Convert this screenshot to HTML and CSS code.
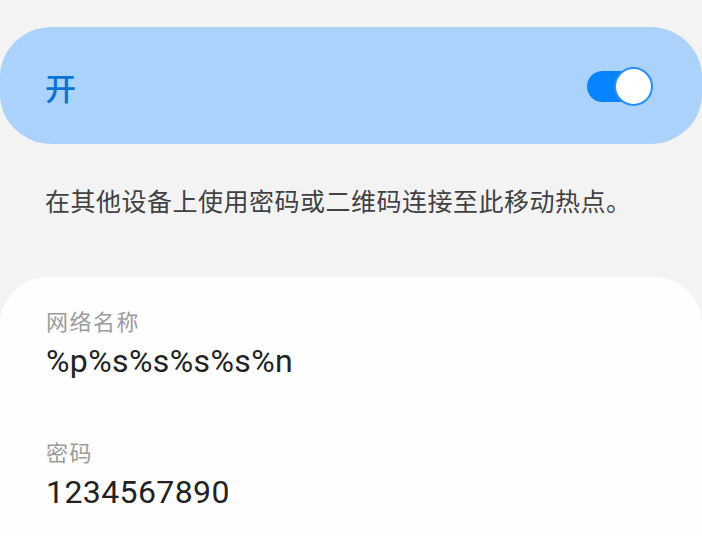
FILE: index.html
```html
<!DOCTYPE html>
<html lang="zh">
<head>
<meta charset="utf-8">
<link rel="stylesheet" href="styles.css">
</head>
<body>
  <div class="switch-card">
    <span class="switch-label">开</span>
    <div class="toggle"><div class="track"></div><div class="thumb"></div></div>
  </div>
  <p class="desc">在其他设备上使用密码或二维码连接至此移动热点。</p>
  <div class="info-card">
    <div class="field">
      <div class="label">网络名称</div>
      <div class="value">%p%s%s%s%s%n</div>
    </div>
    <div class="field">
      <div class="label">密码</div>
      <div class="value">1234567890</div>
    </div>
  </div>
</body>
</html>
```
FILE: styles.css
```css
html, body {
  margin: 0;
  padding: 0;
  height: 536px;
  overflow: hidden;
}
body {
  background: #f3f3f3;
  font-family: Roboto, "Noto Sans CJK SC", sans-serif;
  display: flex;
  flex-direction: column;
}
.switch-card {
  flex: none;
  margin-top: 27px;
  height: 117px;
  background: #abd2fa;
  border-radius: 52px / 50px;
  display: flex;
  align-items: center;
  justify-content: space-between;
  padding: 0 49px 0 45px;
}
.switch-label {
  font-family: "Noto Sans CJK SC", sans-serif;
  font-size: 31px;
  font-weight: 500;
  color: #0a73d8;
  line-height: 36px;
  margin-top: 2px;
}
.toggle {
  position: relative;
  width: 66px;
  height: 38px;
}
.track {
  position: absolute;
  left: 0;
  top: 4px;
  width: 58px;
  height: 31px;
  border-radius: 16px;
  background: #0683fd;
}
.thumb {
  position: absolute;
  right: 0;
  top: 0;
  width: 35px;
  height: 35px;
  border-radius: 50%;
  background: #ffffff;
  border: 2px solid #2a8ff5;
}
.desc {
  flex: none;
  margin: 40px 0 0;
  padding: 0 40px 0 45px;
  font-family: "Noto Sans CJK SC", sans-serif;
  font-size: 25px;
  letter-spacing: 0.5px;
  line-height: 32px;
  color: #414141;
  white-space: nowrap;
}
.info-card {
  flex: 1;
  margin-top: 61px;
  background: #fefefe;
  border-radius: 48px 48px 0 0;
  padding: 28px 46px 0;
}
.field + .field {
  margin-top: 55px;
}
.label {
  font-family: "Noto Sans CJK SC", sans-serif;
  font-size: 22px;
  letter-spacing: 1.5px;
  line-height: 30px;
  color: #9b9b9b;
}
.value {
  margin-top: 6px;
  font-family: Roboto, sans-serif;
  font-size: 32px;
  letter-spacing: 0.4px;
  line-height: 40px;
  color: #222222;
}
```
